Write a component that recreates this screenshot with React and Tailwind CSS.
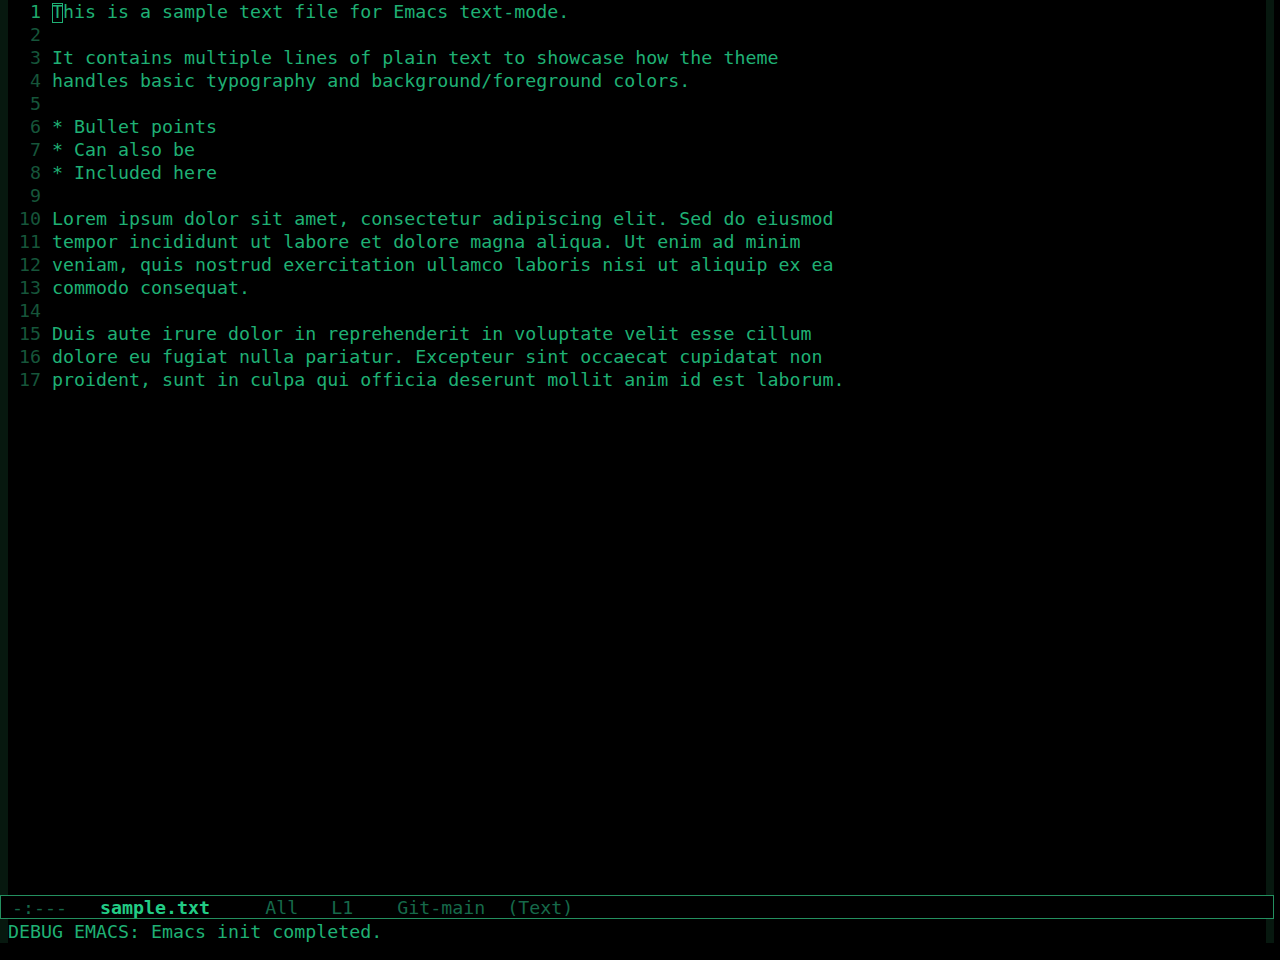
const lines = [
  "This is a sample text file for Emacs text-mode.",
  "",
  "It contains multiple lines of plain text to showcase how the theme",
  "handles basic typography and background/foreground colors.",
  "",
  "* Bullet points",
  "* Can also be",
  "* Included here",
  "",
  "Lorem ipsum dolor sit amet, consectetur adipiscing elit. Sed do eiusmod",
  "tempor incididunt ut labore et dolore magna aliqua. Ut enim ad minim",
  "veniam, quis nostrud exercitation ullamco laboris nisi ut aliquip ex ea",
  "commodo consequat.",
  "",
  "Duis aute irure dolor in reprehenderit in voluptate velit esse cillum",
  "dolore eu fugiat nulla pariatur. Excepteur sint occaecat cupidatat non",
  "proident, sunt in culpa qui officia deserunt mollit anim id est laborum.",
];

const mono = "font-['DejaVu_Sans_Mono',monospace] text-[18.3px] leading-[23px]";

function Fringe() {
  return <div className="w-[8px] shrink-0 bg-[#07180f]" />;
}

export default function App() {
  return (
    <div className={`h-[960px] w-[1280px] overflow-hidden bg-black ${mono} text-[#1fb074]`}>
      {/* buffer window */}
      <div className="flex h-[895px]">
        <Fringe />
        <div className="flex-1">
          {lines.map((text, i) => (
            <div key={i} className="flex h-[23px] whitespace-pre">
              <span
                className={`w-[44px] shrink-0 pl-[11px] pr-[11px] text-right ${
                  i === 0 ? "text-[#1fa86b]" : "text-[#16553a]"
                }`}
              >
                {i + 1}
              </span>
              {i === 0 ? (
                <span>
                  <span className="relative">
                    <span className="absolute left-0 top-[2px] h-[20px] w-[11px] border border-[#1fb074]" />
                    T
                  </span>
                  {text.slice(1)}
                </span>
              ) : (
                <span>{text}</span>
              )}
            </div>
          ))}
        </div>
        <Fringe />
        <div className="w-[6px] shrink-0" />
      </div>

      {/* mode line */}
      <div className="flex h-[24px] w-[1274px] items-center whitespace-pre border border-[#238f5f] text-[#16694a]">
        <span> -:---   </span>
        <span className="font-bold text-[#22cc85]">sample.txt</span>
        <span>     All   L1    Git-main  (Text)</span>
      </div>

      {/* echo area */}
      <div className="flex h-[24px]">
        <Fringe />
        <div className="flex-1 whitespace-pre pt-[1px] leading-[23px] text-[#1fb074]">
          DEBUG EMACS: Emacs init completed.
        </div>
        <Fringe />
        <div className="w-[6px] shrink-0" />
      </div>
    </div>
  );
}
